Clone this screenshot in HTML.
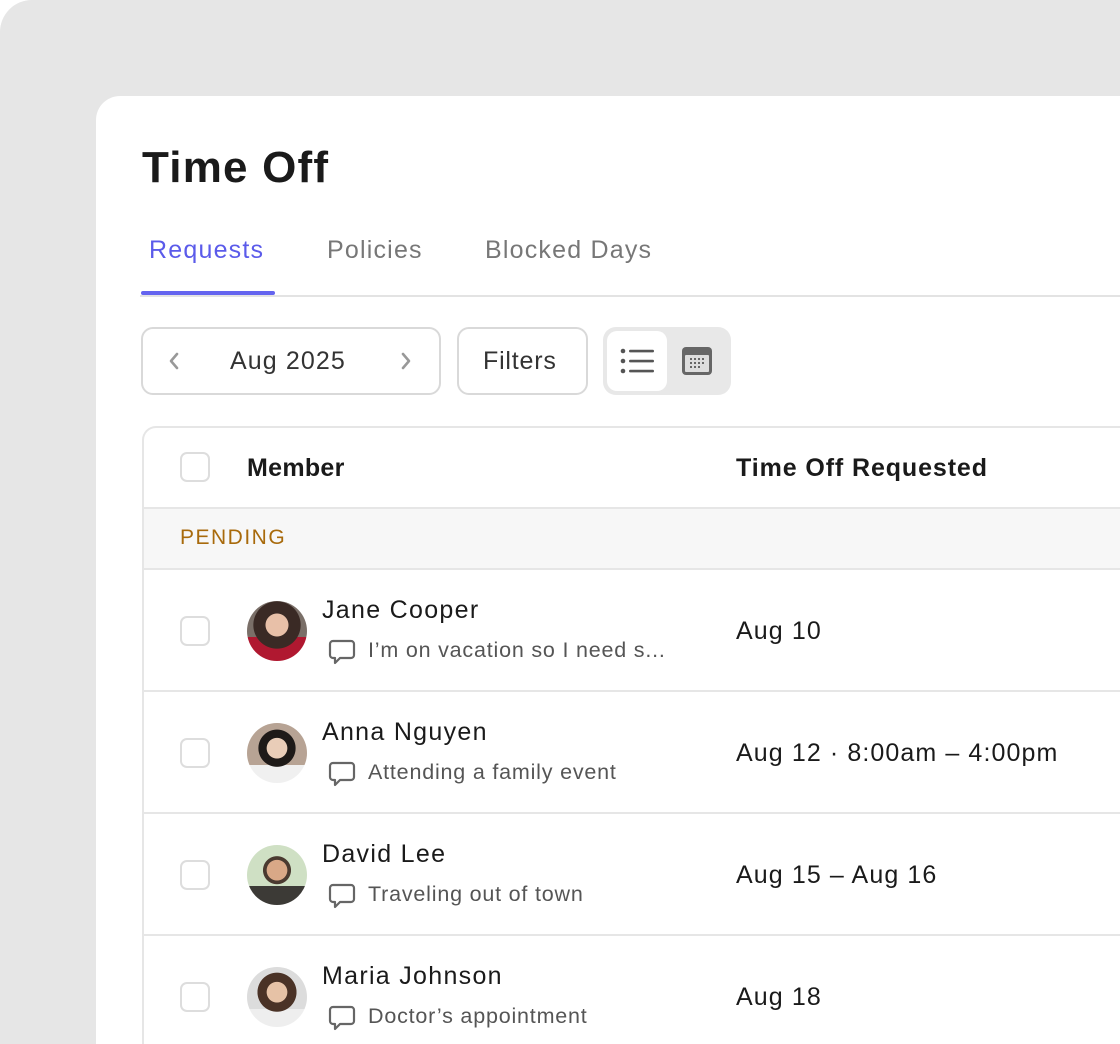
<!DOCTYPE html><html><head><meta charset="utf-8"><style>
*{box-sizing:border-box;margin:0;padding:0}
html,body{width:1120px;height:1044px;overflow:hidden}
body{background:#fff;font-family:"Liberation Sans",sans-serif;position:relative}
.bg{position:absolute;inset:0;background:#e6e6e6;border-top-left-radius:32px}
.card{position:absolute;left:96px;top:96px;width:1024px;height:948px;background:#fff;border-top-left-radius:24px}
.abs{position:absolute}
h1{position:absolute;left:142px;top:143px;font-size:44px;font-weight:700;color:#1a1a1a;letter-spacing:1.2px}
.tab{position:absolute;top:236px;font-size:25px;color:#777;letter-spacing:1.2px}
.btn{position:absolute;top:327px;height:68px;border:2px solid #d9d9d9;border-radius:12px;background:#fff}
.tbl{position:absolute;left:142px;top:426px;width:1100px;height:618px;border:2px solid #e6e6e6;border-bottom:none;border-radius:14px 14px 0 0;overflow:hidden}
.row{position:absolute;left:0;width:100%;border-bottom:2px solid #e6e6e6}
.cb{position:absolute;left:36px;width:30px;height:30px;border:2px solid #ddd;border-radius:7px;background:#fff}
.name{position:absolute;left:178px;font-size:25px;color:#1a1a1a;letter-spacing:1.3px}
.note{position:absolute;left:224px;font-size:21.5px;color:#555;letter-spacing:0.8px}
.date{position:absolute;left:592px;font-size:25px;color:#1a1a1a;letter-spacing:1.1px}
.av{position:absolute;left:103px;width:60px;height:60px;border-radius:50%;overflow:hidden}
.ic{position:absolute;left:184px}
</style></head><body>
<div class="bg"></div>
<div class="card"></div>
<h1>Time Off</h1>
<div class="tab" style="left:149px;color:#5b5bea">Requests</div>
<div class="tab" style="left:327px">Policies</div>
<div class="tab" style="left:485px">Blocked Days</div>
<div class="abs" style="left:140px;top:295px;width:1000px;height:2px;background:#e3e3e3"></div>
<div class="abs" style="left:141px;top:291px;width:134px;height:4px;background:#6464ef;border-radius:2px"></div>

<div class="btn" style="left:141px;width:300px">
<svg class="abs" style="left:24px;top:22px" width="14" height="20" viewBox="0 0 14 20"><path d="M10 3L4 10l6 7" fill="none" stroke="#999" stroke-width="2.6" stroke-linecap="round" stroke-linejoin="round"/></svg>
<div class="abs" style="left:87px;top:18px;font-size:25px;color:#333;letter-spacing:1.1px">Aug 2025</div>
<svg class="abs" style="left:256px;top:22px" width="14" height="20" viewBox="0 0 14 20"><path d="M4 3l6 7-6 7" fill="none" stroke="#999" stroke-width="2.6" stroke-linecap="round" stroke-linejoin="round"/></svg>
</div>
<div class="btn" style="left:457px;width:131px"><div class="abs" style="left:24px;top:18px;font-size:25px;color:#333;letter-spacing:0.8px">Filters</div></div>
<div class="abs" style="left:603px;top:327px;width:128px;height:68px;background:#e8e8e8;border-radius:13px">
<div class="abs" style="left:4px;top:4px;width:60px;height:60px;background:#fff;border-radius:10px">
<svg class="abs" style="left:13px;top:17px" width="36" height="28" viewBox="0 0 36 28"><g fill="#555"><circle cx="3" cy="3" r="2.3"/><circle cx="3" cy="13" r="2.3"/><circle cx="3" cy="23" r="2.3"/><rect x="9" y="1.8" width="25" height="2.6" rx="1.2"/><rect x="9" y="11.8" width="25" height="2.6" rx="1.2"/><rect x="9" y="21.8" width="25" height="2.6" rx="1.2"/></g></svg></div>
<svg class="abs" style="left:78px;top:19px" width="32" height="30" viewBox="0 0 32 30"><rect x="1" y="1" width="30" height="28" rx="4" fill="#666"/><rect x="4" y="9" width="24" height="17" rx="1" fill="#ddd"/><g fill="#666"><rect x="9" y="12" width="2" height="2"/><rect x="13" y="12" width="2" height="2"/><rect x="17" y="12" width="2" height="2"/><rect x="21" y="12" width="2" height="2"/><rect x="9" y="16" width="2" height="2"/><rect x="13" y="16" width="2" height="2"/><rect x="17" y="16" width="2" height="2"/><rect x="21" y="16" width="2" height="2"/><rect x="9" y="20" width="2" height="2"/><rect x="13" y="20" width="2" height="2"/><rect x="17" y="20" width="2" height="2"/></g></svg>
</div>

<div class="tbl">
<div class="row" style="top:0;height:81px"><div class="cb" style="top:24px"></div>
<div class="abs" style="left:103px;top:26px;font-size:25px;font-weight:700;color:#1a1a1a;letter-spacing:0.3px">Member</div>
<div class="abs" style="left:592px;top:26px;font-size:25px;font-weight:700;color:#1a1a1a;letter-spacing:0.9px">Time Off Requested</div></div>
<div class="row" style="top:81px;height:61px;background:#f7f7f7"><div class="abs" style="left:36px;top:17px;font-size:21px;letter-spacing:1.5px;color:#a86a0c">PENDING</div></div>

<div class="row" style="top:142px;height:122px"><div class="cb" style="top:46px"></div>
<div class="av" style="top:31px;background:radial-gradient(circle at 50% 40%,#e8c0a8 0 24%,#3a2a25 25% 50%,transparent 51%),linear-gradient(#7a6f68 0 60%,#b01830 60%)"></div>
<div class="name" style="top:26px">Jane Cooper</div>
<svg class="ic" style="top:68px" width="28" height="28" viewBox="0 0 28 28"><path d="M5 3h18a3 3 0 013 3v11a3 3 0 01-3 3H12l-5 5v-5H5a3 3 0 01-3-3V6a3 3 0 013-3z" fill="none" stroke="#666" stroke-width="2.2" stroke-linejoin="round"/></svg>
<div class="note" style="top:68px">I’m on vacation so I need s...</div>
<div class="date" style="top:47px">Aug 10</div></div>

<div class="row" style="top:264px;height:122px"><div class="cb" style="top:46px"></div>
<div class="av" style="top:31px;background:radial-gradient(circle at 50% 42%,#e9cdb8 0 22%,#1e1a18 23% 40%,transparent 41%),linear-gradient(#b7a394 0 70%,#f0f0f0 70%)"></div>
<div class="name" style="top:26px">Anna Nguyen</div>
<svg class="ic" style="top:68px" width="28" height="28" viewBox="0 0 28 28"><path d="M5 3h18a3 3 0 013 3v11a3 3 0 01-3 3H12l-5 5v-5H5a3 3 0 01-3-3V6a3 3 0 013-3z" fill="none" stroke="#666" stroke-width="2.2" stroke-linejoin="round"/></svg>
<div class="note" style="top:68px">Attending a family event</div>
<div class="date" style="top:47px">Aug 12 · 8:00am – 4:00pm</div></div>

<div class="row" style="top:386px;height:122px"><div class="cb" style="top:46px"></div>
<div class="av" style="top:31px;background:radial-gradient(circle at 50% 42%,#d9a887 0 22%,#4a3a30 23% 30%,transparent 31%),linear-gradient(#cfe0c4 0 68%,#3c3a36 68%)"></div>
<div class="name" style="top:26px">David Lee</div>
<svg class="ic" style="top:68px" width="28" height="28" viewBox="0 0 28 28"><path d="M5 3h18a3 3 0 013 3v11a3 3 0 01-3 3H12l-5 5v-5H5a3 3 0 01-3-3V6a3 3 0 013-3z" fill="none" stroke="#666" stroke-width="2.2" stroke-linejoin="round"/></svg>
<div class="note" style="top:68px">Traveling out of town</div>
<div class="date" style="top:47px">Aug 15 – Aug 16</div></div>

<div class="row" style="top:508px;height:122px;border-bottom:none"><div class="cb" style="top:46px"></div>
<div class="av" style="top:31px;background:radial-gradient(circle at 50% 42%,#e6c2a6 0 22%,#4a3226 23% 42%,transparent 43%),linear-gradient(#dcdcdc 0 70%,#eee 70%)"></div>
<div class="name" style="top:26px">Maria Johnson</div>
<svg class="ic" style="top:68px" width="28" height="28" viewBox="0 0 28 28"><path d="M5 3h18a3 3 0 013 3v11a3 3 0 01-3 3H12l-5 5v-5H5a3 3 0 01-3-3V6a3 3 0 013-3z" fill="none" stroke="#666" stroke-width="2.2" stroke-linejoin="round"/></svg>
<div class="note" style="top:68px">Doctor’s appointment</div>
<div class="date" style="top:47px">Aug 18</div></div>
</div>
</body></html>
